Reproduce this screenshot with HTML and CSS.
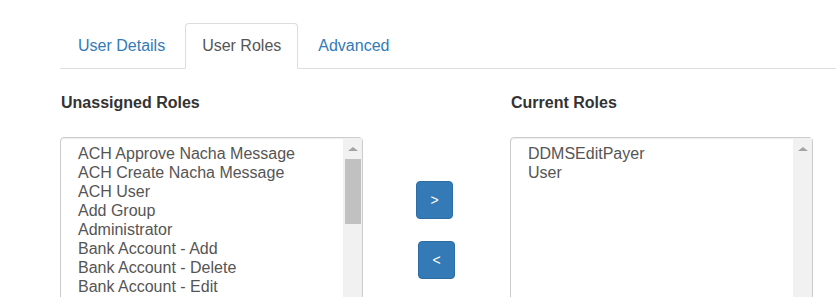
FILE: index.html
```html
<!DOCTYPE html>
<html>
<head>
    <title>Edit User - Roles</title>
    <link rel="stylesheet" href="styles.css">
</head>
<body>
    <div class="page">
        <ul class="nav-tabs">
            <li><a href="#">User Details</a></li>
            <li class="active"><a href="#">User Roles</a></li>
            <li><a href="#">Advanced</a></li>
        </ul>

        <div class="roles">
            <h4 class="roles-title">Unassigned Roles</h4>
            <div></div>
            <h4 class="roles-title">Current Roles</h4>

            <div class="listbox">
                <div class="options">
                    <div>ACH Approve Nacha Message</div>
                    <div>ACH Create Nacha Message</div>
                    <div>ACH User</div>
                    <div>Add Group</div>
                    <div>Administrator</div>
                    <div>Bank Account - Add</div>
                    <div>Bank Account - Delete</div>
                    <div>Bank Account - Edit</div>
                </div>
                <div class="scrollbar">
                    <div class="arrow"></div>
                    <div class="thumb"></div>
                </div>
            </div>

            <div class="move-buttons">
                <button class="btn">&gt;</button>
                <button class="btn btn-back">&lt;</button>
            </div>

            <div class="listbox">
                <div class="options">
                    <div>DDMSEditPayer</div>
                    <div>User</div>
                </div>
                <div class="scrollbar">
                    <div class="arrow"></div>
                </div>
            </div>
        </div>
    </div>
</body>
</html>
```

FILE: styles.css
```css
html, body {
    overflow: hidden;
}
body {
    margin: 0;
    background-color: white;
    color: #333;
    font-family: "Liberation Sans", Arial, sans-serif;
    font-size: 16px;
}
.page {
    padding: 23px 0 0 60px;
}
.nav-tabs {
    display: flex;
    margin: 0;
    padding: 0;
    list-style: none;
    border-bottom: 1px solid #ddd;
}
.nav-tabs li {
    margin-right: 2px;
    margin-bottom: -1px;
}
.nav-tabs a {
    display: block;
    padding: 11px 17px;
    line-height: 22px;
    color: #337ab7;
    text-decoration: none;
    border: 1px solid transparent;
    border-radius: 4px 4px 0 0;
}
.nav-tabs .active a {
    padding: 11px 16px;
    color: #555;
    background-color: white;
    border-color: #ddd #ddd transparent;
}
.roles {
    display: grid;
    grid-template-columns: 303px 147px 303px;
    margin-top: 24px;
}
.roles-title {
    margin: 0 0 24px 1px;
    font-size: 16px;
    line-height: 20px;
    font-weight: bold;
    color: #333;
}
.listbox {
    display: flex;
    height: 180px;
    border: 1px solid #ccc;
    border-radius: 4px;
    box-shadow: inset 0 1px 1px rgba(0, 0, 0, .075);
    color: #555;
}
.options {
    flex: 1;
    padding: 6px 0 0 17px;
    line-height: 19px;
}
.scrollbar {
    width: 19px;
    background-color: #f1f1f1;
}
.arrow {
    width: 0;
    height: 0;
    margin: 9px auto 8px;
    border-left: 5px solid transparent;
    border-right: 5px solid transparent;
    border-bottom: 4px solid #a3a3a3;
}
.thumb {
    height: 65px;
    margin: 0 1px 0 2px;
    background-color: #c1c1c1;
}
.move-buttons {
    display: flex;
    flex-direction: column;
    align-items: flex-start;
    gap: 22px;
    padding: 44px 0 0 53px;
}
.btn {
    width: 37px;
    height: 38px;
    padding: 0;
    color: #fff;
    background-color: #337ab7;
    border: 1px solid #2e6da4;
    border-radius: 4px;
    font-family: "Liberation Sans", Arial, sans-serif;
    font-size: 14px;
    cursor: pointer;
}
.btn-back {
    margin-left: 2px;
}
```
